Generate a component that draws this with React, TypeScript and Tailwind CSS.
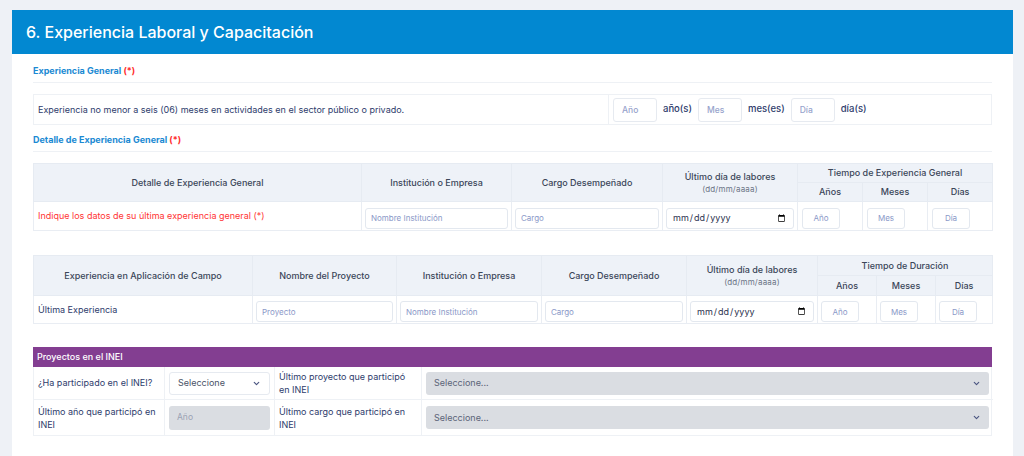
import { ChevronDown } from "lucide-react";

const th = "border border-[#e6ebf2] bg-[#eef2f8] text-[#3b4658] font-medium text-[9px] text-center align-middle";
const td = "border border-[#e9edf3] align-middle";
const inp =
  "h-[21px] w-full rounded-[3px] border border-[#e3e8ef] bg-white px-[5px] text-[8px] text-[#3b4658] placeholder:text-[#8a98c8] outline-none";
const small =
  "h-[21px] w-[38px] rounded-[3px] border border-[#e3e8ef] bg-white text-center text-[8px] placeholder:text-[#8a98c8] outline-none";
const dateInp =
  "h-[21px] w-full rounded-[3px] border border-[#e3e8ef] bg-white px-[5px] text-[9px] text-[#2c3450] outline-none";
const yearInp =
  "h-[24px] w-[44px] rounded-[3px] border border-[#e6eaf0] px-[8px] text-[8.5px] placeholder:text-[#97a3cc] outline-none";

function SectionTitle({ children }: { children: React.ReactNode }) {
  return (
    <div className="border-b border-[#eef1f5] pb-[5px] text-[9px] font-bold leading-[12px] text-[#1b8ad3]">
      {children} <span className="text-[#ff2e2e]">(*)</span>
    </div>
  );
}

function Select({ label, disabled }: { label: string; disabled?: boolean }) {
  return (
    <div
      className={`flex h-[23px] items-center justify-between rounded-[3px] px-[8px] text-[9px] ${
        disabled ? "bg-[#dadde2] text-[#5b6478]" : "border border-[#e6eaf0] bg-white text-[#4a5266]"
      }`}
    >
      <span>{label}</span>
      <ChevronDown className="h-[9px] w-[9px] text-[#4a5580]" strokeWidth={3} />
    </div>
  );
}

function LaborHead() {
  return (
    <>
      <div className="leading-[13px]">Último día de labores</div>
      <div className="text-[8px] font-normal leading-[12px] tracking-[0.2px] text-[#6b7486]">(dd/mm/aaaa)</div>
    </>
  );
}

export default function App() {
  return (
    <div className="min-h-screen bg-[#eef1f6] pl-[12px] pt-[10px] font-['Inter','Noto_Sans',sans-serif]">
      <div className="h-[446px] w-[1001px] bg-white">
        <div className="flex h-[44px] items-center bg-[#0288d1] px-[14px] text-[16px] font-medium text-white">
          6. Experiencia Laboral y Capacitación
        </div>

        <div className="px-[21px] pt-[11px]">
          <SectionTitle>Experiencia General</SectionTitle>

          <div className="mt-[11px] flex h-[31px] border border-[#eef1f5]">
            <div className="flex w-[575px] items-center border-r border-[#eef1f5] pl-[4px] text-[9px] text-[#2e3c6c]">
              Experiencia no menor a seis (06) meses en actividades en el sector público o privado.
            </div>
            <div className="flex items-center gap-[6px] pl-[4px] text-[9.5px] font-medium text-[#2e3c6c]">
              <input className={yearInp} placeholder="Año" />
              <span>año(s)</span>
              <input className={yearInp} placeholder="Mes" />
              <span>mes(es)</span>
              <input className={yearInp} placeholder="Día" />
              <span>día(s)</span>
            </div>
          </div>

          <div className="mt-[9px]">
            <SectionTitle>Detalle de Experiencia General</SectionTitle>
          </div>

          <table className="mt-[11px] w-[959px] table-fixed border-collapse">
            <colgroup>
              <col className="w-[328px]" />
              <col className="w-[150px]" />
              <col className="w-[151px]" />
              <col className="w-[135px]" />
              <col className="w-[65px]" />
              <col className="w-[65px]" />
              <col className="w-[65px]" />
            </colgroup>
            <thead>
              <tr className="h-[19px]">
                <th rowSpan={2} className={th}>Detalle de Experiencia General</th>
                <th rowSpan={2} className={th}>Institución o Empresa</th>
                <th rowSpan={2} className={th}>Cargo Desempeñado</th>
                <th rowSpan={2} className={th}><LaborHead /></th>
                <th colSpan={3} className={th}>Tiempo de Experiencia General</th>
              </tr>
              <tr className="h-[19px]">
                <th className={th}>Años</th>
                <th className={th}>Meses</th>
                <th className={th}>Días</th>
              </tr>
            </thead>
            <tbody>
              <tr className="h-[29px]">
                <td className={`${td} pl-[4px] text-[9px] text-[#ff3434]`}>
                  Indique los datos de su última experiencia general (*)
                </td>
                <td className={`${td} px-[3px]`}><input className={inp} placeholder="Nombre Institución" /></td>
                <td className={`${td} px-[3px]`}><input className={inp} placeholder="Cargo" /></td>
                <td className={`${td} px-[3px]`}><input type="date" className={dateInp} /></td>
                <td className={`${td} pl-[4px]`}><input className={small} placeholder="Año" /></td>
                <td className={`${td} pl-[4px]`}><input className={small} placeholder="Mes" /></td>
                <td className={`${td} pl-[4px]`}><input className={small} placeholder="Día" /></td>
              </tr>
            </tbody>
          </table>

          <table className="mt-[24px] w-[959px] table-fixed border-collapse">
            <colgroup>
              <col className="w-[219px]" />
              <col className="w-[144px]" />
              <col className="w-[145px]" />
              <col className="w-[145px]" />
              <col className="w-[131px]" />
              <col className="w-[59px]" />
              <col className="w-[59px]" />
              <col className="w-[57px]" />
            </colgroup>
            <thead>
              <tr className="h-[20px]">
                <th rowSpan={2} className={th}>Experiencia en Aplicación de Campo</th>
                <th rowSpan={2} className={th}>Nombre del Proyecto</th>
                <th rowSpan={2} className={th}>Institución o Empresa</th>
                <th rowSpan={2} className={th}>Cargo Desempeñado</th>
                <th rowSpan={2} className={th}><LaborHead /></th>
                <th colSpan={3} className={th}>Tiempo de Duración</th>
              </tr>
              <tr className="h-[20px]">
                <th className={th}>Años</th>
                <th className={th}>Meses</th>
                <th className={th}>Días</th>
              </tr>
            </thead>
            <tbody>
              <tr className="h-[28px]">
                <td className={`${td} pl-[4px] text-[9px] text-[#2e3c6c]`}>Última Experiencia</td>
                <td className={`${td} px-[3px]`}><input className={inp} placeholder="Proyecto" /></td>
                <td className={`${td} px-[3px]`}><input className={inp} placeholder="Nombre Institución" /></td>
                <td className={`${td} px-[3px]`}><input className={inp} placeholder="Cargo" /></td>
                <td className={`${td} px-[3px]`}><input type="date" className={dateInp} /></td>
                <td className={`${td} pl-[3px]`}><input className={small} placeholder="Año" /></td>
                <td className={`${td} pl-[3px]`}><input className={small} placeholder="Mes" /></td>
                <td className={`${td} pl-[3px]`}><input className={small} placeholder="Día" /></td>
              </tr>
            </tbody>
          </table>

          <div className="mt-[23px] w-[959px]">
            <div className="flex h-[20px] items-center bg-[#833e91] pl-[4px] text-[9px] font-medium text-white">
              Proyectos en el INEI
            </div>
            <div className="grid grid-cols-[131px_110px_147px_571px] border-x border-b border-[#eef1f5] text-[9px] text-[#2e3c6c]">
              <div className="flex h-[33px] items-center border-b border-r border-[#eef1f5] px-[4px]">¿Ha participado en el INEI?</div>
              <div className="flex items-center border-b border-r border-[#eef1f5] px-[4px]">
                <div className="w-full"><Select label="Seleccione" /></div>
              </div>
              <div className="flex items-center border-b border-r border-[#eef1f5] px-[4px] leading-[13px]">
                Último proyecto que participó en INEI
              </div>
              <div className="flex items-center border-b border-[#eef1f5] px-[4px]">
                <div className="w-full"><Select label="Seleccione..." disabled /></div>
              </div>

              <div className="flex h-[35px] items-center border-r border-[#eef1f5] px-[4px] leading-[13px]">
                Último año que participó en INEI
              </div>
              <div className="flex items-center border-r border-[#eef1f5] px-[4px]">
                <div className="flex h-[24px] w-full items-center rounded-[3px] bg-[#dadde2] px-[8px] text-[8.5px] text-[#9aa2b4]">Año</div>
              </div>
              <div className="flex items-center border-r border-[#eef1f5] px-[4px] leading-[13px]">
                Último cargo que participó en INEI
              </div>
              <div className="flex items-center px-[4px]">
                <div className="w-full"><Select label="Seleccione..." disabled /></div>
              </div>
            </div>
          </div>
        </div>
      </div>
    </div>
  );
}
